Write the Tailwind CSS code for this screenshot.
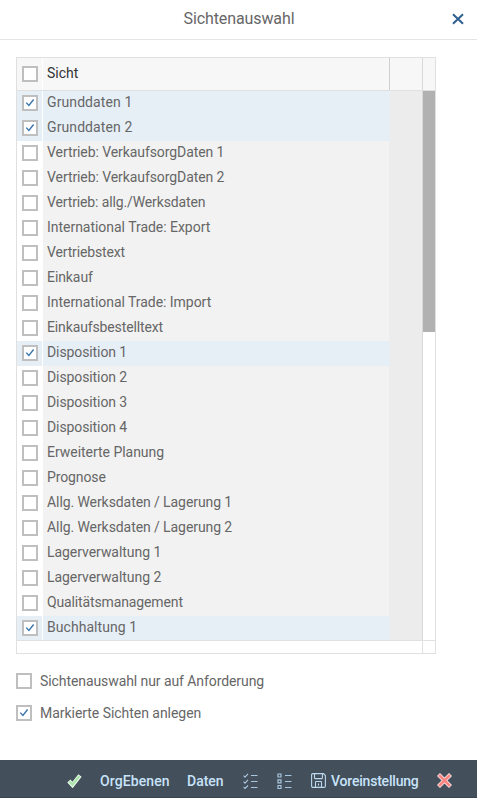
<!DOCTYPE html>
<html lang="de">
<head>
<meta charset="utf-8">
<title>Sichtenauswahl</title>
<script src="https://cdn.jsdelivr.net/npm/@tailwindcss/browser@4"></script>
</head>
<body class="bg-white">
<div class="flex h-[798px] w-[477px] flex-col overflow-hidden bg-white font-['Roboto','Noto_Sans',sans-serif] text-[14px] whitespace-nowrap text-[#666]">
  <header class="grid h-10 shrink-0 grid-cols-[40px_1fr_40px] items-center border-b border-[#e5e5e5]">
    <span></span>
    <h1 class="pb-px pl-px text-center text-[16px] leading-5 tracking-[-0.1px]">Sichtenauswahl</h1>
    <button class="flex justify-center pb-[2px] pl-px" aria-label="Schließen">
      <svg class="size-3" viewBox="0 0 12 12" fill="none" stroke="#2f5f8f" stroke-width="2"><path d="M1 1.2 11 10.8M11 1.2 1 10.8"/></svg>
    </button>
  </header>

  <main class="flex flex-1 flex-col px-4 pt-[17px]">
    <section class="flex h-[597px] w-[420px] flex-col border border-[#e0e0e0]">
      <div class="flex h-[33px] shrink-0 border-b border-[#e0e0e0] bg-[#f7f7f7]">
        <div class="w-[26px] border-r border-white pt-2 pl-[5px]"><div class="size-4 border-2 border-[#bfbfbf] bg-white"></div></div>
        <div class="w-[347px] border-r border-[#d0d0d0] pt-[5px] pl-1 leading-5 text-[#333]">Sicht</div>
        <div class="w-[33px] border-r border-[#d9d9d9]"></div>
      </div>
      <div class="flex h-[549px] shrink-0">
        <div id="rows" class="h-full w-[373px] overflow-hidden"></div>
        <div class="w-[33px] border-r border-[#d9d9d9] bg-[#ececec]"></div>
        <div class="flex-1"><div class="h-[241px] bg-[#b1b1b1]"></div></div>
      </div>
      <div class="flex flex-1 border-t border-[#e0e0e0]"><div class="w-[406px] border-r border-[#e0e0e0]"></div></div>
    </section>

    <div class="mt-[18px] flex h-[18px] items-center gap-2">
      <div class="size-4 border-2 border-[#bfbfbf] bg-white"></div>
      <span class="leading-5 tracking-[-0.08px]">Sichtenauswahl nur auf Anforderung</span>
    </div>
    <div class="mt-[14px] flex h-[18px] items-center gap-2">
      <div class="size-4 border-2 border-[#bfbfbf] bg-white"><svg viewBox="0 0 12 12" fill="none" stroke="#3a76ae" stroke-width="1.4"><path d="M2.3 5.6 4.9 8.5 9.6 2.5"/></svg></div>
      <span class="leading-5 tracking-[-0.04px]">Markierte Sichten anlegen</span>
    </div>
  </main>

  <footer class="flex h-[38px] shrink-0 items-center border-b border-[#3b4650] bg-[#434f5b] pt-[5px] pl-[67px] font-medium text-[#c8e3fa]">
    <svg class="-mt-px h-[15px] w-[15px]" viewBox="0 0 15 15" fill="none"><path d="M1.8 8 5.5 12 13 2.5" stroke="#f0fbef" stroke-width="4.2"/><path d="M2.3 8.4 5.5 11.6 12.5 3" stroke="#aee5ae" stroke-width="2.5"/></svg>
    <span class="ml-[18px] w-[70px] tracking-[0.1px]">OrgEbenen</span>
    <span class="ml-[17px] w-[38px]">Daten</span>
    <svg class="-mt-px ml-[18px] h-4 w-[15px]" viewBox="0 0 15 16" fill="none" stroke="#a9c6de" stroke-width="1.1"><path d="M.6 2.7 2 4.2 5 .9M.6 8.7 2 10.2 5 6.9M.6 14.2 2 15.5 5 12.5M8 2.5h6.5M8 8.5h6.5M8 14.5h6.5"/></svg>
    <svg class="-mt-px ml-[19px] h-4 w-[15px]" viewBox="0 0 15 16" fill="none" stroke="#a9c6de" stroke-width="1.2"><path d="M1 1h3v3H1zM1 6.8h3v3H1zM1 12.5h3v3H1zM8 2.5h6.5M8 8.5h6.5M8 14.5h6.5"/></svg>
    <svg class="-mt-px ml-[19px] h-[15px] w-[15px]" viewBox="0 0 15 15" fill="none" stroke="#bcd8ee" stroke-width="1.1"><path d="M2 .6h10.5L14.4 2.5V13q0 1.4-1.4 1.4H2Q.6 14.4.6 13V2Q.6.6 2 .6ZM3.5.8V5q0 .6.6.6h6.7q.6 0 .6-.6V.8M4.5 14.3V9q0-.5.5-.5h5q.5 0 .5.5v5.3M7.5 10.5v2"/></svg>
    <span class="ml-[5px] w-[88px] tracking-[-0.2px]">Voreinstellung</span>
    <svg class="-mt-px ml-[18px] h-[15px] w-[15px]" viewBox="0 0 15 15" fill="none"><path d="M1.5 1.5l12 12M13.5 1.5l-12 12" stroke="#fff0f0" stroke-width="4.2"/><path d="M2 2l11 11M13 2 2 13" stroke="#fb8583" stroke-width="2.6"/></svg>
  </footer>
</div>
<script>
// [label, selected, tracking class]
const views = [
  ['Grunddaten 1', true, 'tracking-[0.1px]'],
  ['Grunddaten 2', true, 'tracking-[0.1px]'],
  ['Vertrieb: VerkaufsorgDaten 1', false, 'tracking-[-0.08px]'],
  ['Vertrieb: VerkaufsorgDaten 2', false, 'tracking-[-0.08px]'],
  ['Vertrieb: allg./Werksdaten', false, 'tracking-[-0.13px]'],
  ['International Trade: Export', false, 'tracking-[-0.03px]'],
  ['Vertriebstext', false, 'tracking-[-0.15px]'],
  ['Einkauf', false, 'tracking-[-0.08px]'],
  ['International Trade: Import', false, 'tracking-[-0.04px]'],
  ['Einkaufsbestelltext', false, 'tracking-[-0.13px]'],
  ['Disposition 1', true, 'tracking-[-0.1px]'],
  ['Disposition 2', false, 'tracking-[-0.1px]'],
  ['Disposition 3', false, 'tracking-[-0.1px]'],
  ['Disposition 4', false, 'tracking-[-0.1px]'],
  ['Erweiterte Planung', false, 'tracking-[-0.03px]'],
  ['Prognose', false, 'tracking-[-0.12px]'],
  ['Allg. Werksdaten / Lagerung 1', false, 'tracking-[-0.08px]'],
  ['Allg. Werksdaten / Lagerung 2', false, 'tracking-[-0.08px]'],
  ['Lagerverwaltung 1', false, 'tracking-[-0.05px]'],
  ['Lagerverwaltung 2', false, 'tracking-[-0.05px]'],
  ['Qualitätsmanagement', false, 'tracking-[-0.13px]'],
  ['Buchhaltung 1', true, 'tracking-[0.05px]'],
];
const check = '<svg viewBox="0 0 12 12" fill="none" stroke="#3a76ae" stroke-width="1.4"><path d="M2.3 5.6 4.9 8.5 9.6 2.5"/></svg>';
document.getElementById('rows').innerHTML = views.map(([label, on, tracking]) => `
  <div class="flex h-[25px]">
    <div class="w-[26px] border-r border-white pt-1 pl-[5px] ${on ? 'bg-[#e7eff6]' : 'bg-white'}"><div class="size-4 border-2 border-[#bfbfbf] bg-white">${on ? check : ''}</div></div>
    <div class="w-[346px] pt-px pl-1 leading-5 ${tracking} ${on ? 'bg-[#e7eff6]' : 'bg-[#f2f2f2]'}">${label}</div>
    <div class="w-px ${on ? 'bg-[#e7eff6]' : 'bg-[#ececec]'}"></div>
  </div>`).join('');
</script>
</body>
</html>
